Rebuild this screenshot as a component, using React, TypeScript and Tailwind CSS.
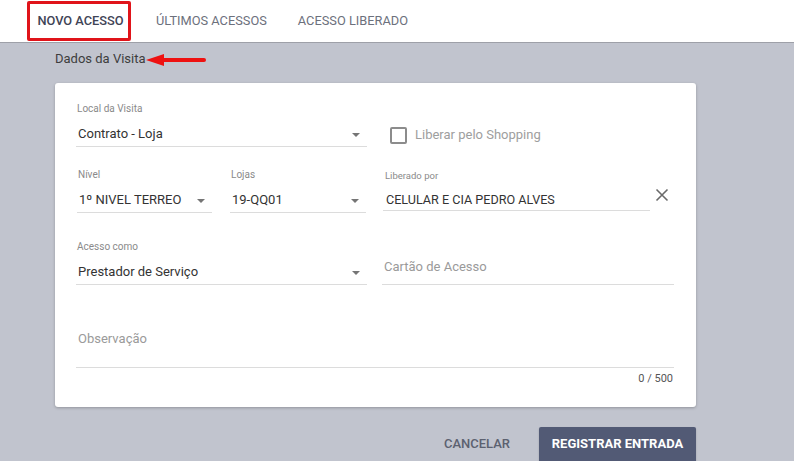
import React from "react";

const Caret = () => (
  <svg width="10" height="6" viewBox="0 0 10 6" className="shrink-0">
    <path d="M1 1 L9 1 L5 5 Z" fill="#757575" />
  </svg>
);

function SelectField({
  label,
  value,
  className = "",
}: {
  label: string;
  value: string;
  className?: string;
}) {
  return (
    <div className={"flex flex-col " + className}>
      <div className="text-[10px] leading-[12px] text-[#8a8a8a] pl-[1px] mt-[1px]">{label}</div>
      <div className="mt-[9px] flex h-[23px] items-start justify-between border-b border-[#dcdcdc] pl-[2px] pr-[6px]">
        <span className="text-[13px] leading-[20px] text-[#333]">{value}</span>
        <span className="mt-[8px]">
          <Caret />
        </span>
      </div>
    </div>
  );
}

export default function App() {
  return (
    <div
      className="flex h-[461px] w-[794px] flex-col overflow-hidden bg-[#c1c4ce]"
      style={{ fontFamily: "Roboto, 'Liberation Sans', sans-serif" }}
    >
      {/* Tabs */}
      <div className="flex h-[43px] shrink-0 items-start border-b border-[#9ea0a8] bg-white">
        <div className="ml-[27px] mt-[1px] flex h-[40px] w-[104px] items-center justify-center rounded-[2px] border-[3px] border-[#e0141a] pl-[3px]">
          <span className="text-[12.8px] font-medium text-[#3f4456]">NOVO ACESSO</span>
        </div>
        <div className="ml-[25px] flex h-[41px] items-center">
          <span className="text-[12.8px] text-[#6c707c]">ÚLTIMOS ACESSOS</span>
        </div>
        <div className="ml-[31px] flex h-[41px] items-center">
          <span className="text-[12.8px] text-[#6c707c]">ACESSO LIBERADO</span>
        </div>
      </div>

      {/* Body */}
      <div className="flex flex-col pl-[55px]">
        <div className="relative mt-[6px] flex h-[20px] items-center">
          <span className="text-[13px] text-[#3d3d3d]">Dados da Visita</span>
          <svg width="62" height="16" viewBox="0 0 62 16" className="absolute left-[91px] top-[3px]">
            <path d="M14 8 L58 8" stroke="#ee1111" strokeWidth="4" strokeLinecap="round" />
            <path d="M0 8 L18 2 L18 14 Z" fill="#ee1111" />
          </svg>
        </div>

        {/* Card */}
        <div className="mt-[14px] h-[324px] w-[641px] rounded-[3px] bg-white pl-[21px] pr-[22px] pt-[19px] shadow-[0_1px_3px_rgba(0,0,0,0.25)]">
          {/* Row 1 */}
          <div className="grid grid-cols-[291px_292px] gap-x-[15px]">
            <SelectField label="Local da Visita" value="Contrato - Loja" />
            <div className="flex items-center pl-[8px] pt-[21px]">
              <div className="h-[17px] w-[17px] rounded-[2px] border-2 border-[#8c8c8c]" />
              <span className="ml-[8px] text-[13px] text-[#9e9e9e]">Liberar pelo Shopping</span>
            </div>
          </div>

          {/* Row 2 */}
          <div className="mt-[21px] grid grid-cols-[291px_292px] gap-x-[15px]">
            <div className="grid grid-cols-[136px_136px] gap-x-[18px]">
              <SelectField label="Nível" value="1º NIVEL TERREO" className="pl-[1px]" />
              <SelectField label="Lojas" value="19-QQ01" />
            </div>
            <div className="flex items-start">
              <div className="flex w-[268px] flex-col pl-[1px] pt-[2px]">
                <div className="text-[9.5px] leading-[12px] text-[#8a8a8a] pl-[2px]">Liberado por</div>
                <div className="mt-[5px] h-[24px] border-b border-[#dcdcdc] pl-[3px]">
                  <span className="text-[12.6px] leading-[20px] text-[#333]">CELULAR E CIA PEDRO ALVES</span>
                </div>
              </div>
              <svg width="14" height="14" viewBox="0 0 14 14" className="ml-[5px] mt-[20px]">
                <path d="M1.5 1.5 L12.5 12.5 M12.5 1.5 L1.5 12.5" stroke="#6a6a6a" strokeWidth="1.6" />
              </svg>
            </div>
          </div>

          {/* Row 3 */}
          <div className="mt-[27px] grid grid-cols-[291px_292px] items-end gap-x-[15px]">
            <SelectField label="Acesso como" value="Prestador de Serviço" />
            <div className="flex h-[28px] items-start border-b border-[#dcdcdc] pl-[2px]">
              <span className="text-[13px] leading-[20px] text-[#9a9a9a]">Cartão de Acesso</span>
            </div>
          </div>

          {/* Row 4 */}
          <div className="mt-[45px] flex h-[38px] items-start border-b border-[#dcdcdc] pl-[2px]">
            <span className="text-[13px] leading-[18px] text-[#9a9a9a]">Observação</span>
          </div>
          <div className="mt-[4px] flex justify-end pr-[1px]">
            <span className="text-[11px] leading-[14px] text-[#555]">0 / 500</span>
          </div>
        </div>

        {/* Buttons */}
        <div className="mt-[20px] flex w-[641px] items-start justify-end">
          <div className="mr-[18px] flex h-[34px] w-[88px] items-center justify-center">
            <span className="text-[13px] font-medium text-[#5c6170]">CANCELAR</span>
          </div>
          <div className="flex h-[36px] w-[157px] items-center justify-center rounded-[2px] bg-[#525a75] pb-[2px] shadow-[0_1px_2px_rgba(0,0,0,0.2)]">
            <span className="text-[13px] font-bold text-white">REGISTRAR ENTRADA</span>
          </div>
        </div>
      </div>
    </div>
  );
}
